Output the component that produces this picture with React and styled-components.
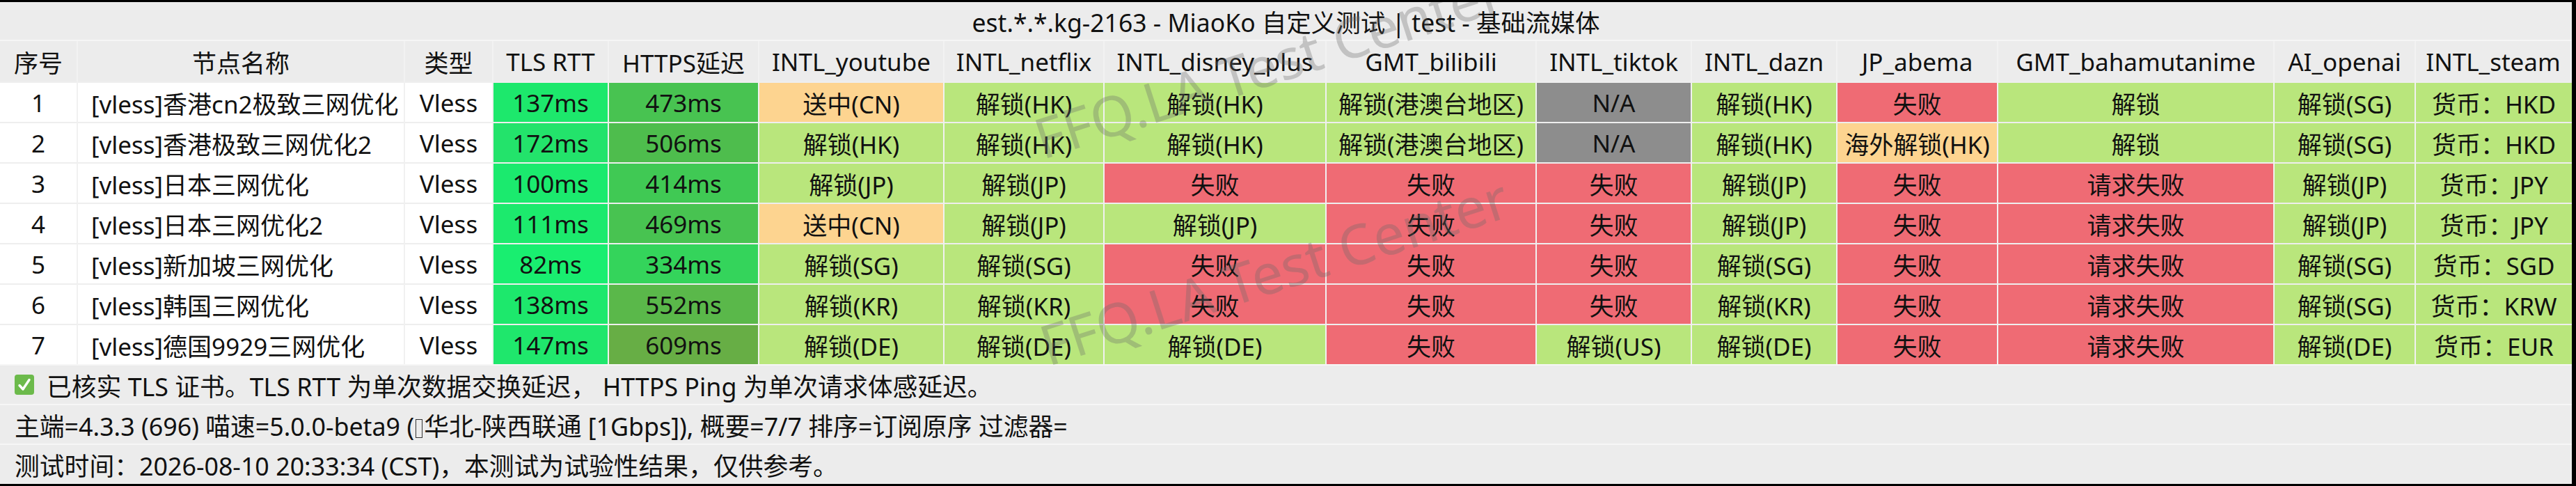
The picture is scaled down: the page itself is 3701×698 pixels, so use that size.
import styled, { createGlobalStyle } from "styled-components";

const GlobalStyle = createGlobalStyle`
  body {
    margin: 0;
    background: #000;
    font-family: "Noto Sans", "Noto Sans CJK SC", sans-serif;
    color: #111;
  }
`;

const columns = [
  { title: "序号", width: 112 },
  { title: "节点名称", width: 470 },
  { title: "类型", width: 127 },
  { title: "TLS RTT", width: 166 },
  { title: "HTTPS延迟", width: 216 },
  { title: "INTL_youtube", width: 266 },
  { title: "INTL_netflix", width: 230 },
  { title: "INTL_disney_plus", width: 319 },
  { title: "GMT_bilibili", width: 302 },
  { title: "INTL_tiktok", width: 223 },
  { title: "INTL_dazn", width: 209 },
  { title: "JP_abema", width: 231 },
  { title: "GMT_bahamutanime", width: 397 },
  { title: "AI_openai", width: 203 },
  { title: "INTL_steam", width: 224 },
];

const tones = {
  plain: "#ffffff",
  ok: "#b9e67c",
  warn: "#fdd490",
  fail: "#ef6b74",
  na: "#8d8d8d",
};

const rows = [
  {
    name: "[vless]香港cn2极致三网优化",
    rtt: ["137ms", "#1de86c"],
    https: ["473ms", "#48c351"],
    tests: [
      ["送中(CN)", "warn"], ["解锁(HK)", "ok"], ["解锁(HK)", "ok"], ["解锁(港澳台地区)", "ok"],
      ["N/A", "na"], ["解锁(HK)", "ok"], ["失败", "fail"], ["解锁", "ok"], ["解锁(SG)", "ok"], ["货币：HKD", "ok"],
    ],
  },
  {
    name: "[vless]香港极致三网优化2",
    rtt: ["172ms", "#23e36b"],
    https: ["506ms", "#4ebd4d"],
    tests: [
      ["解锁(HK)", "ok"], ["解锁(HK)", "ok"], ["解锁(HK)", "ok"], ["解锁(港澳台地区)", "ok"],
      ["N/A", "na"], ["解锁(HK)", "ok"], ["海外解锁(HK)", "warn"], ["解锁", "ok"], ["解锁(SG)", "ok"], ["货币：HKD", "ok"],
    ],
  },
  {
    name: "[vless]日本三网优化",
    rtt: ["100ms", "#1bea6e"],
    https: ["414ms", "#40c954"],
    tests: [
      ["解锁(JP)", "ok"], ["解锁(JP)", "ok"], ["失败", "fail"], ["失败", "fail"],
      ["失败", "fail"], ["解锁(JP)", "ok"], ["失败", "fail"], ["请求失败", "fail"], ["解锁(JP)", "ok"], ["货币：JPY", "ok"],
    ],
  },
  {
    name: "[vless]日本三网优化2",
    rtt: ["111ms", "#1cea6d"],
    https: ["469ms", "#48c351"],
    tests: [
      ["送中(CN)", "warn"], ["解锁(JP)", "ok"], ["解锁(JP)", "ok"], ["失败", "fail"],
      ["失败", "fail"], ["解锁(JP)", "ok"], ["失败", "fail"], ["请求失败", "fail"], ["解锁(JP)", "ok"], ["货币：JPY", "ok"],
    ],
  },
  {
    name: "[vless]新加坡三网优化",
    rtt: ["82ms", "#19ee70"],
    https: ["334ms", "#34d45b"],
    tests: [
      ["解锁(SG)", "ok"], ["解锁(SG)", "ok"], ["失败", "fail"], ["失败", "fail"],
      ["失败", "fail"], ["解锁(SG)", "ok"], ["失败", "fail"], ["请求失败", "fail"], ["解锁(SG)", "ok"], ["货币：SGD", "ok"],
    ],
  },
  {
    name: "[vless]韩国三网优化",
    rtt: ["138ms", "#1de86c"],
    https: ["552ms", "#5ab84a"],
    tests: [
      ["解锁(KR)", "ok"], ["解锁(KR)", "ok"], ["失败", "fail"], ["失败", "fail"],
      ["失败", "fail"], ["解锁(KR)", "ok"], ["失败", "fail"], ["请求失败", "fail"], ["解锁(SG)", "ok"], ["货币：KRW", "ok"],
    ],
  },
  {
    name: "[vless]德国9929三网优化",
    rtt: ["147ms", "#1fe76c"],
    https: ["609ms", "#67ae45"],
    tests: [
      ["解锁(DE)", "ok"], ["解锁(DE)", "ok"], ["解锁(DE)", "ok"], ["失败", "fail"],
      ["解锁(US)", "ok"], ["解锁(DE)", "ok"], ["失败", "fail"], ["请求失败", "fail"], ["解锁(DE)", "ok"], ["货币：EUR", "ok"],
    ],
  },
];

const Frame = styled.div`
  position: relative;
  width: 3695px;
  height: 692px;
  margin-top: 3px;
  background: #ececec;
  overflow: hidden;
  font-size: 35px;
`;

const Title = styled.div`
  height: 54px;
  display: flex;
  align-items: center;
  justify-content: center;
  border-bottom: 2px solid #f6f6f6;
  font-size: 35.5px;
`;

const Table = styled.div`
  display: grid;
  grid-template-columns: ${columns.map((c) => `${c.width}px`).join(" ")};
  grid-template-rows: 58px;
  grid-auto-rows: 58px;
`;

const HeadCell = styled.div`
  display: flex;
  align-items: center;
  justify-content: center;
  white-space: nowrap;
  background: #ececec;
  border-right: 2px solid #f2f2f2;
  &:last-child {
    border-right: none;
  }
`;

const Cell = styled.div`
  display: flex;
  align-items: center;
  justify-content: ${(p) => (p.$left ? "flex-start" : "center")};
  padding-left: ${(p) => (p.$left ? "19px" : "0")};
  white-space: nowrap;
  background: ${(p) => p.$bg};
  border-right: 2px solid #f1f1f1;
  border-top: 2px solid #eeeeee;
  &:nth-child(15n) {
    border-right: none;
  }
`;

const Footer = styled.div`
  display: flex;
  flex-direction: column;
`;

const FootRow = styled.div`
  height: 55px;
  display: flex;
  align-items: center;
  gap: 18px;
  padding-left: 21px;
  border-top: 2px solid #f6f6f6;
  white-space: nowrap;
  font-size: 35.8px;
`;

const Tofu = styled.span`
  display: inline-block;
  width: 8px;
  height: 25px;
  border: 1.5px solid #333;
  margin: 0 2px;
  vertical-align: -3px;
`;

const Watermark = styled.div`
  position: absolute;
  left: ${(p) => p.$x}px;
  top: ${(p) => p.$y}px;
  transform: translate(-50%, -50%) rotate(-18deg);
  font-size: 80px;
  color: rgba(105, 105, 105, 0.32);
  white-space: nowrap;
  pointer-events: none;
`;

const CheckIcon = () => (
  <svg width="28" height="29" viewBox="0 0 28 29">
    <rect x="0" y="0" width="28" height="29" rx="4" fill="#6cba4b" />
    <path
      d="M7 15.5 L12 21 L21 7.5"
      fill="none"
      stroke="#fff"
      strokeWidth="3.4"
      strokeLinecap="round"
      strokeLinejoin="round"
    />
  </svg>
);

const App = () => {
  return (
    <>
      <GlobalStyle />
      <Frame>
        <Title>est.*.*.kg-2163 - MiaoKo 自定义测试 | test - 基础流媒体</Title>
        <Table>
          {columns.map((c) => (
            <HeadCell key={c.title}>{c.title}</HeadCell>
          ))}
          {rows.map((r, i) => [
            <Cell key={`${i}-n`} $bg={tones.plain}>{i + 1}</Cell>,
            <Cell key={`${i}-name`} $bg={tones.plain} $left>{r.name}</Cell>,
            <Cell key={`${i}-t`} $bg={tones.plain}>Vless</Cell>,
            <Cell key={`${i}-rtt`} $bg={r.rtt[1]}>{r.rtt[0]}</Cell>,
            <Cell key={`${i}-https`} $bg={r.https[1]}>{r.https[0]}</Cell>,
            ...r.tests.map(([text, tone], k) => (
              <Cell key={`${i}-${k}`} $bg={tones[tone]}>{text}</Cell>
            )),
          ])}
        </Table>
        <Footer>
          <FootRow>
            <CheckIcon />
            <span>已核实 TLS 证书。TLS RTT 为单次数据交换延迟， HTTPS Ping 为单次请求体感延迟。</span>
          </FootRow>
          <FootRow>
            <span>
              主端=4.3.3 (696) 喵速=5.0.0-beta9 (<Tofu />华北-陕西联通 [1Gbps]), 概要=7/7 排序=订阅原序 过滤器=
            </span>
          </FootRow>
          <FootRow>
            <span>测试时间：2026-08-10 20:33:34 (CST)，本测试为试验性结果，仅供参考。</span>
          </FootRow>
        </Footer>
        <Watermark $x={1822} $y={88}>FFQ.LA Test Center</Watermark>
        <Watermark $x={1830} $y={385}>FFQ.LA Test Center</Watermark>
      </Frame>
    </>
  );
};

export default App;
